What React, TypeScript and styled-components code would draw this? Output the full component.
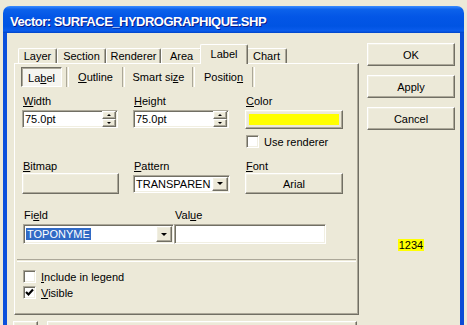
import styled, { createGlobalStyle } from 'styled-components';

const GlobalStyle = createGlobalStyle`
  html, body {
    margin: 0;
    padding: 0;
  }
  body {
    background: #ece9d8;
    font-family: 'Liberation Sans', Arial, sans-serif;
    font-size: 11px;
    color: #000;
    overflow: hidden;
  }
`;

const Page = styled.div`
  width: 467px;
  height: 325px;
  box-sizing: border-box;
  padding: 6px 0 0 3px;
  overflow: hidden;
  background: #ece9d8;
`;

const Window = styled.div`
  width: 461px;
  display: flex;
  flex-direction: column;
`;

const TitleBar = styled.div`
  height: 27px;
  box-sizing: border-box;
  padding: 4px 0 0 7px;
  display: flex;
  align-items: center;
  border-radius: 7px 7px 0 0;
  background: linear-gradient(180deg, #3a8cff 0%, #0c62eb 12%, #0356e6 40%, #0054e3 75%, #0a5cec 92%, #0044c8 100%);
`;

const Title = styled.span`
  font-family: 'Liberation Sans', Arial, sans-serif;
  font-weight: bold;
  font-size: 13px;
  letter-spacing: -0.5px;
  color: #fff;
  text-shadow: 1px 1px #0a1a8a;
  white-space: nowrap;
`;

const Body = styled.div`
  height: 300px;
  display: flex;
  background: #ece9d8;
  border-left: 4px solid #0b50dc;
  border-right: 4px solid #0a4bd6;
`;

const LeftCol = styled.div`
  padding: 11px 0 0 7px;
  display: flex;
  flex-direction: column;
`;

const TabStrip = styled.div`
  height: 19px;
  display: flex;
  align-items: flex-end;
  padding-left: 4px;
`;

const Tab = styled.div<{ $w: number; $active?: boolean }>`
  width: ${p => p.$w}px;
  height: ${p => (p.$active ? 20 : 15)}px;
  box-sizing: border-box;
  display: flex;
  align-items: center;
  justify-content: center;
  padding-bottom: ${p => (p.$active ? 2 : 0)}px;
  background: #ece9d8;
  border-top: 1px solid #fff;
  border-left: 1px solid #fff;
  border-right: 1px solid #716f64;
  box-shadow: inset -1px 0 #aca899;
  border-radius: 2px 2px 0 0;
  margin: ${p => (p.$active ? '0 -2px -1px -2px' : '0')};
  position: relative;
  z-index: ${p => (p.$active ? 1 : 0)};
  white-space: nowrap;
`;

const TabPanel = styled.div`
  width: 345px;
  height: 252px;
  box-sizing: border-box;
  padding-top: 3px;
  border-top: 1px solid #fff;
  border-left: 1px solid #fff;
  border-right: 1px solid #716f64;
  border-bottom: 1px solid #716f64;
  box-shadow: inset -1px -1px #aca899;
  display: flex;
  flex-direction: column;
`;

const SubTabs = styled.div`
  height: 20px;
  display: flex;
  margin-left: 6px;
`;

const SubTab = styled.div<{ $w: number; $active?: boolean }>`
  width: ${p => p.$w}px;
  box-sizing: border-box;
  display: flex;
  align-items: center;
  justify-content: center;
  white-space: nowrap;
  ${p =>
    p.$active
      ? `
    background: #f6f5f0;
    border-top: 1px solid #716f64;
    border-left: 1px solid #716f64;
    border-right: 1px solid #fff;
    border-bottom: 1px solid #fff;
    box-shadow: inset 1px 1px #aca899;
    margin-right: 4px;
    padding-top: 1px;
  `
      : ''}
`;

const SubSep = styled.div`
  width: 1px;
  border-left: 1px solid #aca899;
  border-right: 1px solid #fff;
`;

const FormGrid = styled.div`
  margin: 8px 0 0 7px;
  display: grid;
  grid-template-columns: 111px 112px 98px;
  grid-template-rows: 15px 19px 19px 25px 21px;
`;

const FieldLabel = styled.div<{ $end?: boolean }>`
  height: 13px;
  line-height: 13px;
  padding-left: 1px;
  align-self: ${p => (p.$end ? 'end' : 'start')};
  white-space: nowrap;
`;

const Cell = styled.div<{ $align?: string }>`
  display: flex;
  align-items: ${p => p.$align ?? 'flex-start'};
`;

const TextBox = styled.div<{ $w: number; $h?: number }>`
  width: ${p => p.$w}px;
  height: ${p => p.$h ?? 18}px;
  box-sizing: border-box;
  background: #fff;
  border-top: 1px solid #aca899;
  border-left: 1px solid #aca899;
  border-right: 1px solid #fff;
  border-bottom: 1px solid #fff;
  box-shadow: inset 1px 1px #716f64, inset -1px -1px #f1efe2;
  display: flex;
  align-items: center;
  padding: 1px 1px 1px 2px;
  overflow: hidden;
`;

const BoxText = styled.span`
  flex: 1;
  white-space: nowrap;
`;

const Selected = styled.span`
  background: #316ac5;
  color: #fff;
  padding: 0 1px;
  line-height: 13px;
`;

const SpinCol = styled.div`
  width: 14px;
  height: 16px;
  display: flex;
  flex-direction: column;
`;

const Raised = styled.div`
  box-sizing: border-box;
  background: #ece9d8;
  border-top: 1px solid #fff;
  border-left: 1px solid #fff;
  border-right: 1px solid #716f64;
  border-bottom: 1px solid #716f64;
  box-shadow: inset -1px -1px #aca899, inset 1px 1px #f1efe2;
  display: flex;
  align-items: center;
  justify-content: center;
`;

const SpinButton = styled(Raised)`
  flex: 1;
`;

const DropButton = styled(Raised)<{ $w: number }>`
  width: ${p => p.$w}px;
  height: 100%;
  flex: none;
`;

const Arrow = styled.span<{ $up?: boolean; $size: number }>`
  width: 0;
  height: 0;
  border-left: ${p => p.$size}px solid transparent;
  border-right: ${p => p.$size}px solid transparent;
  ${p =>
    p.$up
      ? `border-bottom: ${Math.ceil(p.$size / 2) + 1}px solid #000;`
      : `border-top: ${Math.ceil(p.$size / 2) + 1}px solid #000;`}
`;

const PushButton = styled(Raised)<{ $w: number; $h: number }>`
  width: ${p => p.$w}px;
  height: ${p => p.$h}px;
  white-space: nowrap;
`;

const Swatch = styled.div<{ $color: string }>`
  position: absolute;
  inset: 3px 3px 3px 3px;
  background: ${p => p.$color};
`;

const ColorButton = styled(PushButton)`
  position: relative;
`;

const CheckRow = styled.label<{ $indent?: number }>`
  display: flex;
  align-items: center;
  gap: 5px;
  height: 13px;
  margin-left: ${p => p.$indent ?? 0}px;
  white-space: nowrap;
`;

const CheckBox = styled.span`
  width: 13px;
  height: 13px;
  box-sizing: border-box;
  background: #fff;
  border-top: 1px solid #aca899;
  border-left: 1px solid #aca899;
  border-right: 1px solid #fff;
  border-bottom: 1px solid #fff;
  box-shadow: inset 1px 1px #716f64, inset -1px -1px #f1efe2;
  display: flex;
  align-items: center;
  justify-content: center;
`;

const FieldRow = styled.div`
  margin: 15px 0 0 8px;
  display: flex;
`;

const FieldCol = styled.div<{ $w: number }>`
  width: ${p => p.$w}px;
  display: flex;
  flex-direction: column;
  gap: 2px;
`;

const Separator = styled.div`
  margin: 15px 2px 0 2px;
  height: 1px;
  border-top: 1px solid #aca899;
  border-bottom: 1px solid #fff;
`;

const Checks = styled.div`
  margin: 8px 0 0 8px;
  display: flex;
  flex-direction: column;
  gap: 3px;
`;

const BottomStrip = styled.div`
  margin-top: 6px;
  display: flex;
  gap: 9px;
  margin-left: -1px;
`;

const StripBox = styled(Raised)<{ $w: number }>`
  width: ${p => p.$w}px;
  height: 12px;
`;

const RightCol = styled.div`
  width: 101px;
  padding: 10px 0 0 3px;
  box-sizing: border-box;
  display: flex;
  flex-direction: column;
  align-items: center;
  gap: 9px;
`;

const Sample = styled.span`
  margin-top: 100px;
  background: #ffff00;
  padding: 0 1px;
  line-height: 12px;
`;

const Check = () => (
  <svg width="9" height="9" viewBox="0 0 9 9">
    <path d="M1 4 L3.5 6.5 L8 1.5" fill="none" stroke="#000" strokeWidth="2.2" />
  </svg>
);

const SpinInput = ({ value }: { value: string }) => (
  <TextBox $w={96}>
    <BoxText>{value}</BoxText>
    <SpinCol>
      <SpinButton>
        <Arrow $up $size={2} />
      </SpinButton>
      <SpinButton>
        <Arrow $size={2} />
      </SpinButton>
    </SpinCol>
  </TextBox>
);

const tabs = [
  { name: 'Layer', w: 39 },
  { name: 'Section', w: 49 },
  { name: 'Renderer', w: 55 },
  { name: 'Area', w: 41 },
  { name: 'Label', w: 48, active: true },
  { name: 'Chart', w: 41 },
];

export default function App() {
  return (
    <>
      <GlobalStyle />
      <Page>
        <Window>
          <TitleBar>
            <Title>Vector: SURFACE_HYDROGRAPHIQUE.SHP</Title>
          </TitleBar>
          <Body>
            <LeftCol>
              <TabStrip>
                {tabs.map(t => (
                  <Tab key={t.name} $w={t.w} $active={t.active}>
                    {t.name}
                  </Tab>
                ))}
              </TabStrip>
              <TabPanel>
                <SubTabs>
                  <SubTab $w={41} $active>
                    <span>
                      La<u>b</u>el
                    </span>
                  </SubTab>
                  <SubSep />
                  <SubTab $w={53}>
                    <span>
                      <u>O</u>utline
                    </span>
                  </SubTab>
                  <SubSep />
                  <SubTab $w={67}>
                    <span>
                      Smart si<u>z</u>e
                    </span>
                  </SubTab>
                  <SubSep />
                  <SubTab $w={57}>
                    <span>
                      Positio<u>n</u>
                    </span>
                  </SubTab>
                  <SubSep />
                </SubTabs>

                <FormGrid>
                  <FieldLabel>
                    <u>W</u>idth
                  </FieldLabel>
                  <FieldLabel>
                    <u>H</u>eight
                  </FieldLabel>
                  <FieldLabel>
                    <u>C</u>olor
                  </FieldLabel>

                  <Cell>
                    <SpinInput value="75.0pt" />
                  </Cell>
                  <Cell>
                    <SpinInput value="75.0pt" />
                  </Cell>
                  <Cell>
                    <ColorButton $w={98} $h={19}>
                      <Swatch $color="#ffff00" />
                    </ColorButton>
                  </Cell>

                  <Cell />
                  <Cell />
                  <Cell $align="flex-end">
                    <CheckRow $indent={1}>
                      <CheckBox />
                      Use renderer
                    </CheckRow>
                  </Cell>

                  <FieldLabel $end>
                    <u>B</u>itmap
                  </FieldLabel>
                  <FieldLabel $end>
                    <u>P</u>attern
                  </FieldLabel>
                  <FieldLabel $end>
                    <u>F</u>ont
                  </FieldLabel>

                  <Cell $align="center">
                    <PushButton $w={97} $h={21} />
                  </Cell>
                  <Cell $align="center">
                    <TextBox $w={97}>
                      <BoxText>TRANSPAREN</BoxText>
                      <DropButton $w={16}>
                        <Arrow $size={3} />
                      </DropButton>
                    </TextBox>
                  </Cell>
                  <Cell $align="center">
                    <PushButton $w={98} $h={21}>
                      Arial
                    </PushButton>
                  </Cell>
                </FormGrid>

                <FieldRow>
                  <FieldCol $w={151}>
                    <FieldLabel>
                      Fi<u>e</u>ld
                    </FieldLabel>
                    <TextBox $w={151} $h={20}>
                      <BoxText>
                        <Selected>TOPONYME</Selected>
                      </BoxText>
                      <DropButton $w={16}>
                        <Arrow $size={3} />
                      </DropButton>
                    </TextBox>
                  </FieldCol>
                  <FieldCol $w={152}>
                    <FieldLabel>
                      Val<u>u</u>e
                    </FieldLabel>
                    <TextBox $w={152} $h={20} />
                  </FieldCol>
                </FieldRow>

                <Separator />

                <Checks>
                  <CheckRow>
                    <CheckBox />
                    <span>
                      <u>I</u>nclude in legend
                    </span>
                  </CheckRow>
                  <CheckRow>
                    <CheckBox>
                      <Check />
                    </CheckBox>
                    <span>
                      <u>V</u>isible
                    </span>
                  </CheckRow>
                </Checks>
              </TabPanel>
              <BottomStrip>
                <StripBox $w={25} />
                <StripBox $w={310} />
              </BottomStrip>
            </LeftCol>
            <RightCol>
              <PushButton $w={88} $h={23}>
                OK
              </PushButton>
              <PushButton $w={88} $h={23}>
                Apply
              </PushButton>
              <PushButton $w={88} $h={23}>
                Cancel
              </PushButton>
              <Sample>1234</Sample>
            </RightCol>
          </Body>
        </Window>
      </Page>
    </>
  );
}
